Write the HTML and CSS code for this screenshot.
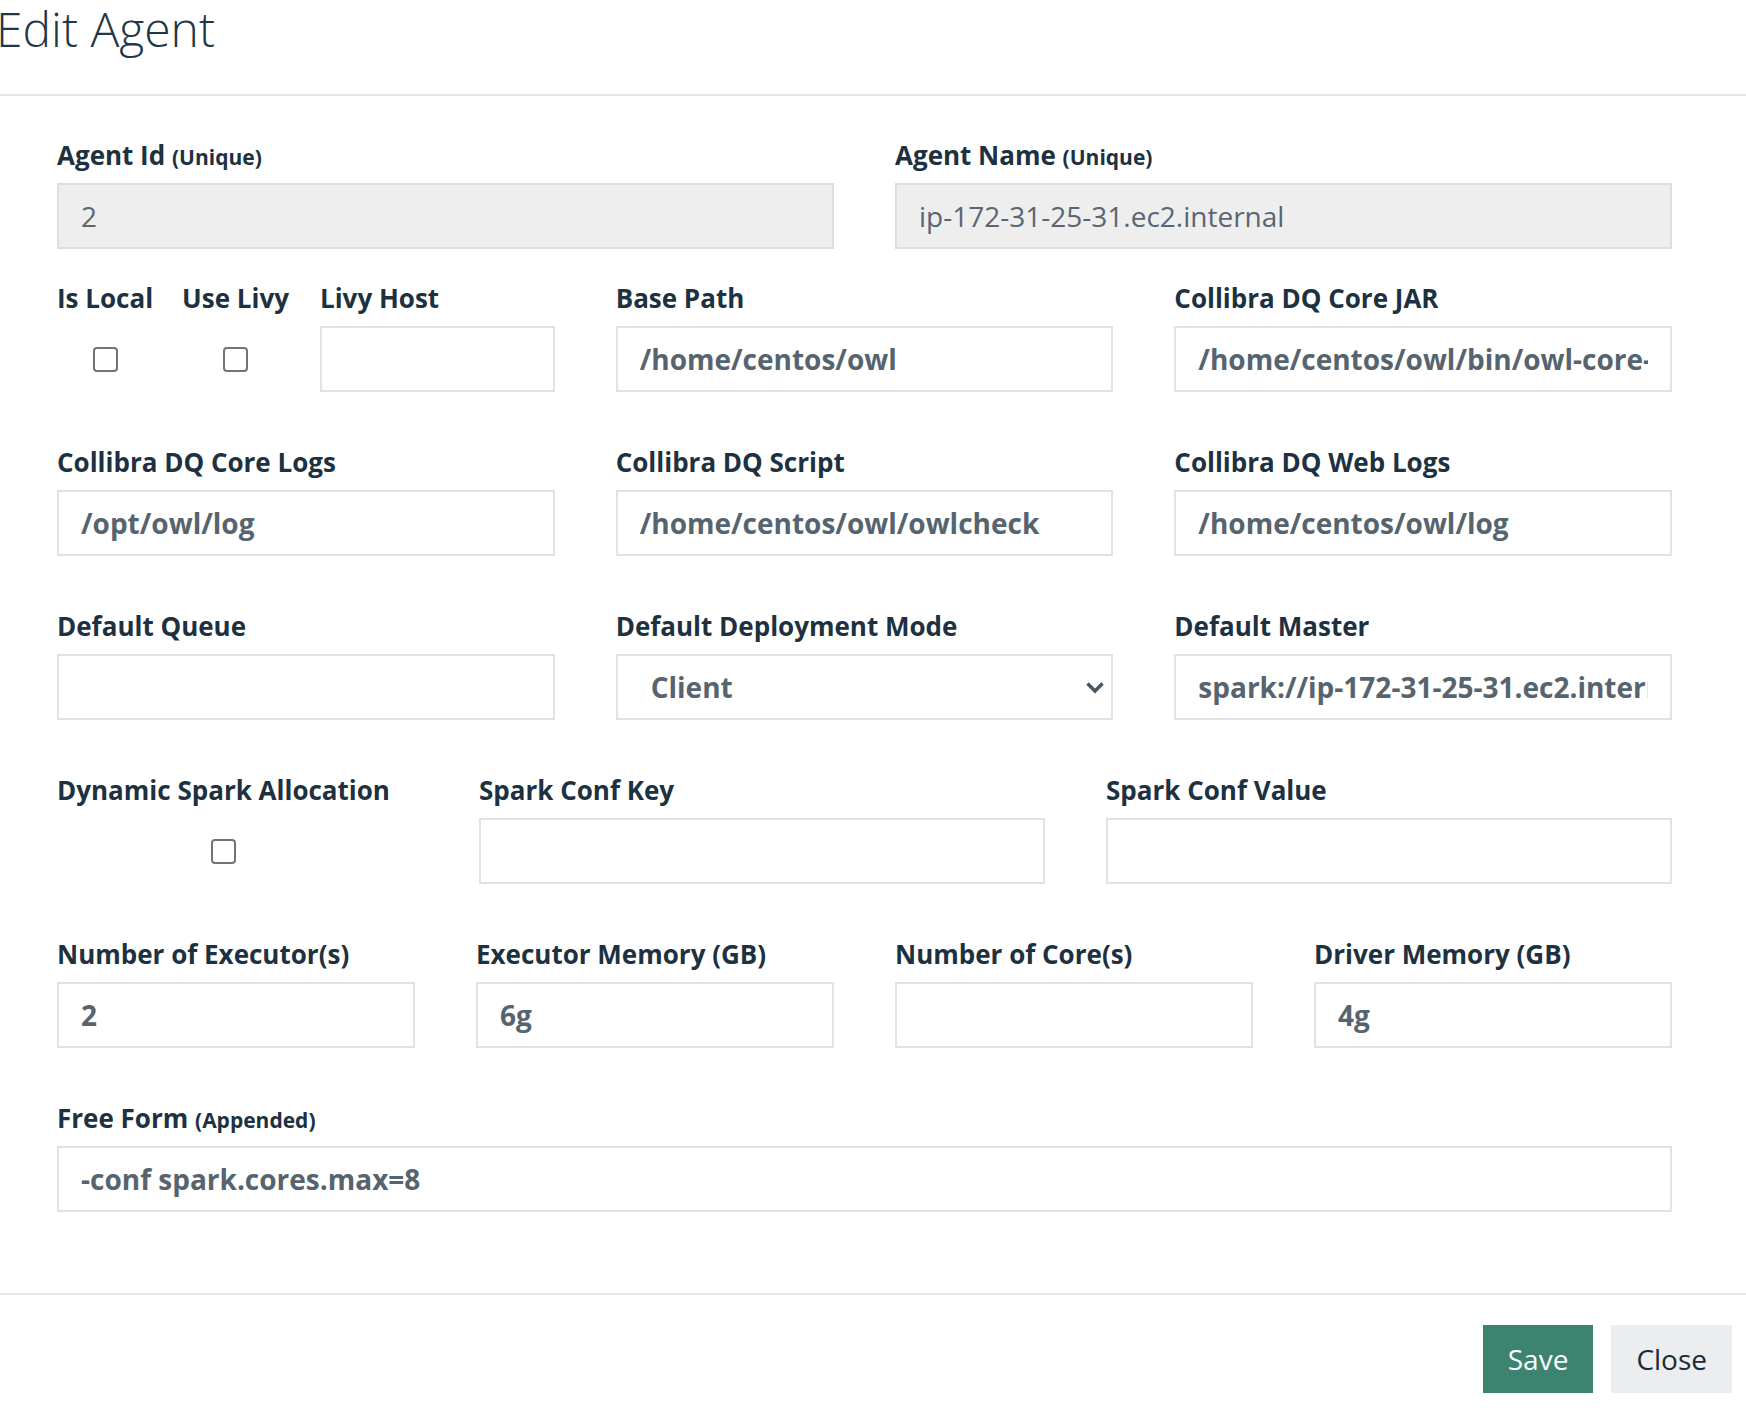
FILE: index.html
```html
<!DOCTYPE html>
<html lang="en">

<head>
  <meta charset="UTF-8" />
  <title>Edit Agent</title>
  <link rel="stylesheet" href="styles.css">
</head>

<body>
  <div class="modal">
    <div class="modal-header">
      <h1 class="modal-title">Edit Agent</h1>
    </div>

    <form class="modal-body">
      <div class="form-row cols-2 first-row">
        <div class="field">
          <label>Agent Id <small>(Unique)</small></label>
          <input class="input" type="text" value="2" disabled />
        </div>
        <div class="field">
          <label>Agent Name <small>(Unique)</small></label>
          <input class="input" type="text" value="ip-172-31-25-31.ec2.internal" disabled />
        </div>
      </div>

      <div class="form-row cols-3">
        <div class="field-split">
          <div class="check-field">
            <label>Is Local</label>
            <div class="check-box-wrap"><span class="checkbox"></span></div>
          </div>
          <div class="check-field">
            <label>Use Livy</label>
            <div class="check-box-wrap"><span class="checkbox"></span></div>
          </div>
          <div class="field grow">
            <label>Livy Host</label>
            <input class="input" type="text" value="" />
          </div>
        </div>
        <div class="field">
          <label>Base Path</label>
          <input class="input" type="text" value="/home/centos/owl" />
        </div>
        <div class="field">
          <label>Collibra DQ Core JAR</label>
          <input class="input" type="text" value="/home/centos/owl/bin/owl-core-2022.04.jar" />
        </div>
      </div>

      <div class="form-row cols-3">
        <div class="field">
          <label>Collibra DQ Core Logs</label>
          <input class="input" type="text" value="/opt/owl/log" />
        </div>
        <div class="field">
          <label>Collibra DQ Script</label>
          <input class="input" type="text" value="/home/centos/owl/owlcheck" />
        </div>
        <div class="field">
          <label>Collibra DQ Web Logs</label>
          <input class="input" type="text" value="/home/centos/owl/log" />
        </div>
      </div>

      <div class="form-row cols-3">
        <div class="field">
          <label>Default Queue</label>
          <input class="input" type="text" value="" />
        </div>
        <div class="field">
          <label>Default Deployment Mode</label>
          <div class="select-wrap">
            <select class="input select">
              <option>Client</option>
              <option>Cluster</option>
            </select>
            <svg class="chevron" width="20" height="13" viewBox="0 0 20 13">
              <path d="M2.5 2.5 L10 10 L17.5 2.5" fill="none" stroke="#4a555e" stroke-width="3.5" />
            </svg>
          </div>
        </div>
        <div class="field">
          <label>Default Master</label>
          <input class="input" type="text" value="spark://ip-172-31-25-31.ec2.internal:7077" />
        </div>
      </div>

      <div class="form-row cols-spark">
        <div class="check-field">
          <label>Dynamic Spark Allocation</label>
          <div class="check-box-wrap"><span class="checkbox"></span></div>
        </div>
        <div class="field">
          <label>Spark Conf Key</label>
          <input class="input" type="text" value="" />
        </div>
        <div class="field">
          <label>Spark Conf Value</label>
          <input class="input" type="text" value="" />
        </div>
      </div>

      <div class="form-row cols-4">
        <div class="field">
          <label>Number of Executor(s)</label>
          <input class="input" type="text" value="2" />
        </div>
        <div class="field">
          <label>Executor Memory (GB)</label>
          <input class="input" type="text" value="6g" />
        </div>
        <div class="field">
          <label>Number of Core(s)</label>
          <input class="input" type="text" value="" />
        </div>
        <div class="field">
          <label>Driver Memory (GB)</label>
          <input class="input" type="text" value="4g" />
        </div>
      </div>

      <div class="form-row">
        <div class="field">
          <label>Free Form <small>(Appended)</small></label>
          <input class="input" type="text" value="-conf spark.cores.max=8" />
        </div>
      </div>
    </form>

    <div class="modal-footer">
      <button class="btn btn-save" type="button">Save</button>
      <button class="btn btn-close" type="button">Close</button>
    </div>
  </div>
</body>

</html>
```

FILE: styles.css
```css
* {
  margin: 0;
  padding: 0;
  box-sizing: border-box;
}

body {
  background-color: #ffffff;
  font-family: "Open Sans", "Noto Sans", sans-serif;
  color: #1d3140;
  overflow: hidden;
}

.modal {
  width: 100%;
}

.modal-header {
  padding-bottom: 36px;
  border-bottom: 2px solid #e6e6e6;
}

/* the dialog is cropped on the left, so the title hugs the edge */
.modal-title {
  font-size: 48px;
  font-weight: 300;
  line-height: 58px;
  color: #1f3747;
  margin-left: -4px;
}

.modal-body {
  padding: 40px 74px 30px 57px;
}

.form-row {
  display: grid;
  grid-template-columns: 1fr;
  column-gap: 61px;
  margin-bottom: 51px;
}

.form-row.first-row {
  margin-bottom: 30px;
}

.cols-2 {
  grid-template-columns: 1fr 1fr;
}

.cols-3 {
  grid-template-columns: 1fr 1fr 1fr;
}

.cols-4 {
  grid-template-columns: 1fr 1fr 1fr 1fr;
}

.cols-spark {
  grid-template-columns: 361px 1fr 1fr;
}

.field {
  display: flex;
  flex-direction: column;
  min-width: 0;
}

.field.grow {
  flex: 1;
  margin-left: 2px;
}

label {
  display: block;
  font-size: 26px;
  font-weight: 700;
  line-height: 39px;
  margin-bottom: 8px;
  color: #1d3140;
  white-space: nowrap;
}

label small {
  font-size: 21px;
  font-weight: 700;
  line-height: 1;
}

.input {
  display: block;
  width: 100%;
  height: 66px;
  padding: 0 22px;
  border: 2px solid #dfe3e6;
  border-radius: 0;
  background: #ffffff;
  font-family: "Open Sans", "Noto Sans", sans-serif;
  font-size: 28px;
  font-weight: 700;
  color: #56646f;
  outline: none;
}

.input:disabled {
  background: #eeeeee;
  border-color: #dcdfe2;
  font-weight: 400;
  color: #5a6671;
}

/* checkbox groups: label left, box centred under it */
.field-split {
  display: flex;
  gap: 29px;
  min-width: 0;
}

.check-field {
  display: inline-flex;
  flex-direction: column;
  align-items: center;
  justify-self: start;
}

.check-box-wrap {
  height: 66px;
  display: flex;
  align-items: center;
}

.checkbox {
  display: block;
  width: 25px;
  height: 25px;
  border: 2px solid #737373;
  border-radius: 4px;
  background: #ffffff;
}

.select-wrap {
  position: relative;
}

.select {
  appearance: none;
  -webkit-appearance: none;
  padding-left: 33px;
  cursor: pointer;
}

.chevron {
  position: absolute;
  right: 8px;
  top: 27px;
  pointer-events: none;
}

.modal-footer {
  border-top: 2px solid #e6e6e6;
  display: flex;
  justify-content: flex-end;
  gap: 18px;
  padding: 30px 14px 16px 0;
}

.btn {
  height: 68px;
  padding: 0 25px;
  border: none;
  border-radius: 0;
  font-family: "Open Sans", "Noto Sans", sans-serif;
  font-size: 28px;
  font-weight: 400;
  cursor: pointer;
}

.btn-save {
  background: #3c8470;
  color: #ffffff;
}

.btn-close {
  background: #ebedef;
  color: #1b2a35;
}
```
